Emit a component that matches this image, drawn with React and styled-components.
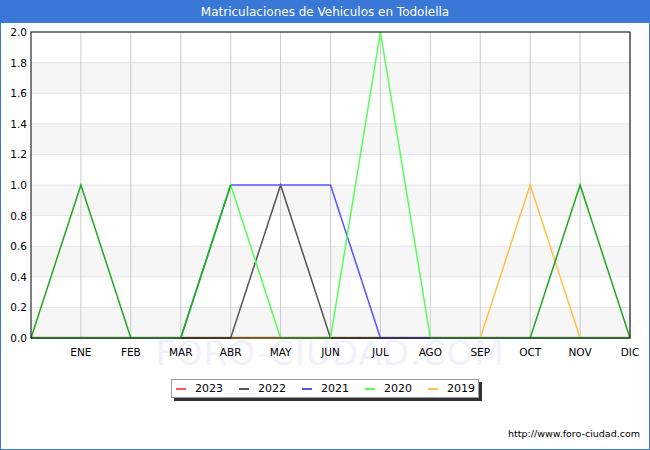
import styled, { createGlobalStyle } from "styled-components";

const Global = createGlobalStyle`
  html, body { margin: 0; padding: 0; background: #fff; }
  body { font-family: "DejaVu Sans", sans-serif; }
`;

const X0 = 31, X1 = 630, Y0 = 337, Y1 = 31;
const xs = (i) => X0 + (i * (X1 - X0)) / 12;
const ys = (v) => Y0 - (v / 2) * (Y0 - Y1);
const months = ["ENE","FEB","MAR","ABR","MAY","JUN","JUL","AGO","SEP","OCT","NOV","DIC"];

const zeros = () => Array(13).fill(0);
const withVals = (o) => { const a = zeros(); Object.entries(o).forEach(([k, v]) => (a[k] = v)); return a; };

const series = [
  { label: "2019", color: "#ffc04a", data: withVals({ 10: 1 }) },
  { label: "2022", color: "#555555", data: withVals({ 5: 1 }) },
  { label: "2021", color: "#5555ff", data: withVals({ 4: 1, 5: 1, 6: 1 }) },
  { label: "2020", color: "#55ff55", data: withVals({ 4: 1, 7: 2 }) },
  { label: "", color: "#22a722", data: withVals({ 1: 1, 4: 1, 11: 1 }), partial: [[0,1,2],[3,4],[10,11,12]] },
];
const legend = [
  { label: "2023", color: "#ff5555" },
  { label: "2022", color: "#555555" },
  { label: "2021", color: "#5555ff" },
  { label: "2020", color: "#55ff55" },
  { label: "2019", color: "#ffc04a" },
];

const Frame = styled.div`
  width: 648px; height: 448px; border: 1px solid #3a78d8;
  display: flex; flex-direction: column; position: relative;
`;
const Title = styled.div`
  height: 22px; background: #3a78d8; color: #fff; font-size: 12px;
  display: flex; align-items: center; justify-content: center;
`;
const Legend = styled.div`
  align-self: flex-start; margin: 8px 0 0 170px;
  width: 308px; height: 19px; border: 1px solid #999; background: #fff;
  box-shadow: 3px 3px 0 #333; display: flex; align-items: center;
  gap: 16px; padding-left: 4px; box-sizing: border-box; font-size: 11px;
`;
const Item = styled.span`
  display: inline-flex; align-items: center; gap: 9px; color: #000;
  &::before { content: ""; width: 10px; height: 2px; background: ${(p) => p.$c}; }
`;
const Footer = styled.div`
  margin-top: auto; padding: 0 9px 10px 0; text-align: right;
  font-size: 9.5px; color: #000;
`;

function Chart() {
  const path = (d, idx) => (idx || d.map((_, i) => i)).map((i, k) => `${k ? "L" : "M"}${xs(i)},${ys(d[i])}`).join(" ");
  return (
    <svg width="648" height="348" viewBox="1 22 648 348" style={{ display: "block" }}>
      <text x="330" y="364" fontSize="34" textAnchor="middle" fill="#f0f1fb" letterSpacing="1">FORO-CIUDAD.COM</text>
      {[0, 2, 4, 6, 8].map((k) => (
        <rect key={k} x={X0} y={ys(k * 0.2 + 0.2)} width={X1 - X0} height={ys(0) - ys(0.2)} fill="#f6f6f6" />
      ))}
      {Array.from({ length: 11 }, (_, k) => (
        <g key={k}>
          <line x1={X0} x2={X1} y1={ys(k * 0.2)} y2={ys(k * 0.2)} stroke="#e4e4e4" />
          <text x={X0 - 4} y={ys(k * 0.2) + 4} fontSize="10.5" textAnchor="end" fill="#000">{(k * 0.2).toFixed(1)}</text>
        </g>
      ))}
      {months.map((m, i) => (
        <g key={m}>
          <line x1={xs(i + 1)} x2={xs(i + 1)} y1={Y1} y2={Y0} stroke="#cccccc" />
          <text x={xs(i + 1)} y={355} fontSize="10.5" textAnchor="middle" fill="#000">{m}</text>
        </g>
      ))}
      <line x1={xs(0)} x2={X1} y1={Y0 - 0.5} y2={Y0 - 0.5} stroke="#b08a3a" strokeWidth="1.5" />
      {series.map((s, n) =>
        s.partial ? s.partial.map((p, j) => (
          <path key={n + "-" + j} d={path(s.data, p)} fill="none" stroke={s.color} strokeWidth="1.5" />
        )) : <path key={n} d={path(s.data)} fill="none" stroke={s.color} strokeWidth="1.5" />
      )}
      <rect x={X0} y={Y1} width={X1 - X0} height={Y0 - Y1} fill="none" stroke="#000" />
    </svg>
  );
}

export default function App() {
  return (
    <>
      <Global />
      <Frame>
        <Title>Matriculaciones de Vehiculos en Todolella</Title>
        <Chart />
        <Legend>
          {legend.map((l) => <Item key={l.label} $c={l.color}>{l.label}</Item>)}
        </Legend>
        <Footer>http://www.foro-ciudad.com</Footer>
      </Frame>
    </>
  );
}
